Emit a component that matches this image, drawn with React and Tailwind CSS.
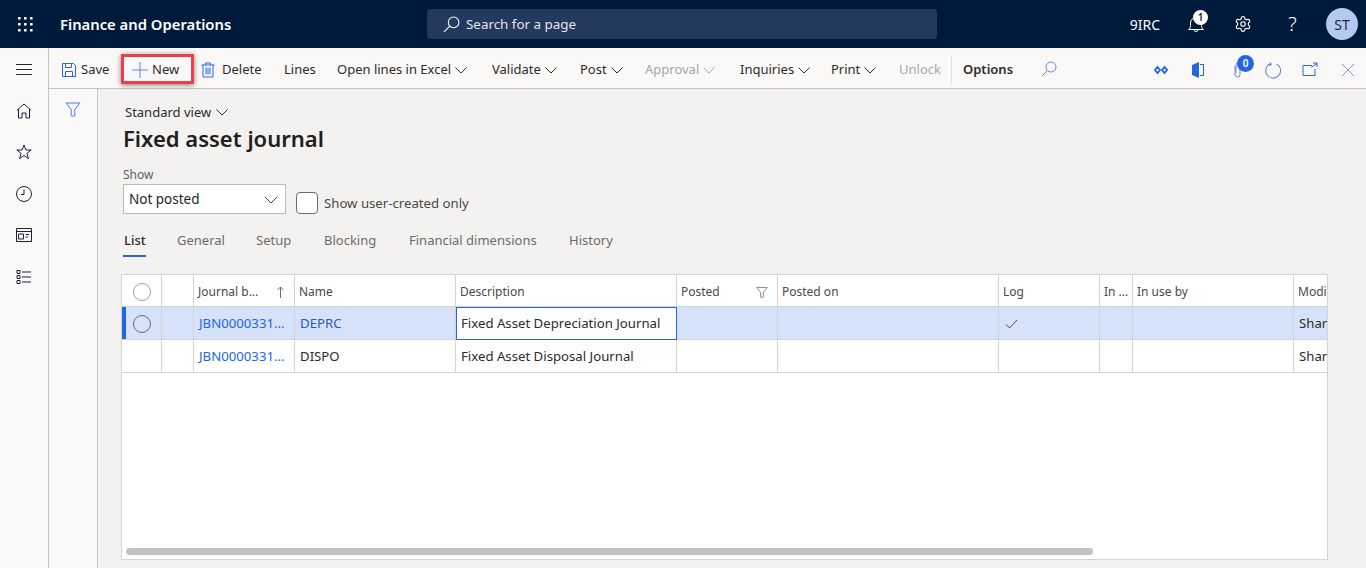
import React from 'react';
import { ChevronDown, Settings } from 'lucide-react';

const Icon = ({ className = 'w-4 h-4', children, strokeWidth = 1 }) => (
  <svg className={className} viewBox="0 0 16 16" fill="none" stroke="currentColor" strokeWidth={strokeWidth}>
    {children}
  </svg>
);

const Chevron = ({ className = 'w-3 h-[7px] ml-1' }) => (
  <svg className={className} viewBox="0 0 12 7" fill="none" stroke="currentColor">
    <path d="M.5 .5L6 6l5.5-5.5" />
  </svg>
);

const FunnelIcon = ({ className }) => (
  <Icon className={className}>
    <path d="M1 2h14L9.8 8.5V15H6.2V8.5z" />
  </Icon>
);

const WaffleIcon = () => (
  <svg className="w-4 h-4 text-white" viewBox="0 0 16 16" fill="currentColor">
    {[1, 7, 13].map(y => [1, 7, 13].map(x => <rect key={`${x}-${y}`} x={x} y={y} width="2.6" height="2.6" rx="0.6" />))}
  </svg>
);

const ToolItem = ({ label, chevron, disabled, className = '' }) => (
  <div className={`flex items-center whitespace-nowrap ${disabled ? 'text-[#a6a6a6]' : 'text-[#2b2b2b]'} ${className}`}>
    <span>{label}</span>
    {chevron && <Chevron />}
  </div>
);

const Toolbar = () => (
  <div className="h-[41px] pt-[4px] shrink-0 flex items-center text-[13px] border-b border-[#c8c6c4] bg-[#faf9f8]">
    <div className="flex items-center pl-3 w-[72px] shrink-0">
      <Icon className="w-4 h-4 text-[#2266e3] mr-[4px] shrink-0">
        <path d="M1.5 1.5h11l2 2v11h-13z" />
        <path d="M4.5 1.5v4h6v-4M4.5 14.5V9.5h7v5" />
      </Icon>
      <span className="text-[#2b2b2b]">Save</span>
    </div>
    <div className="w-[73px] h-[30px] -mt-[2px] pt-[1px] shrink-0 flex items-center pl-[8px] border-[3px] border-[#ee3f46] shadow-[0_1px_5px_rgba(0,0,0,0.5)] bg-[#f8f8f8] mr-[6px]">
      <Icon className="w-4 h-4 text-[#6c82d8] mr-[4px] shrink-0">
        <path d="M8 0v16M0 8h16" />
      </Icon>
      <span className="text-[#2b2b2b]">New</span>
    </div>
    <div className="flex items-center w-[84px] shrink-0">
      <Icon className="w-4 h-4 text-[#2266e3] mr-[6px] shrink-0">
        <path d="M1.5 3h13M5.5 3V1h5v2M3 3v12h10V3M6 5.5v7M8 5.5v7M10 5.5v7" />
      </Icon>
      <span className="text-[#2b2b2b]">Delete</span>
    </div>
    <ToolItem label="Lines" className="w-[53px] shrink-0" />
    <ToolItem label="Open lines in Excel" chevron className="w-[155px] shrink-0" />
    <ToolItem label="Validate" chevron className="w-[88px] shrink-0" />
    <ToolItem label="Post" chevron className="w-[65px] shrink-0" />
    <ToolItem label="Approval" chevron disabled className="w-[95px] shrink-0" />
    <ToolItem label="Inquiries" chevron className="w-[91px] shrink-0" />
    <ToolItem label="Print" chevron className="w-[68px] shrink-0" />
    <ToolItem label="Unlock" disabled className="w-[52px] shrink-0" />
    <div className="w-px h-7 bg-[#e1dfdd] mr-[11px] shrink-0" />
    <span className="font-semibold text-[#2b2b2b] w-[78px] shrink-0">Options</span>
    <Icon className="w-4 h-4 text-[#6c82d8] -mt-[2px] shrink-0">
      <circle cx="10" cy="6" r="5" />
      <path d="M6.5 9.5L1 15" />
    </Icon>
    <div className="flex-1" />
    <div className="flex items-center text-[#2266e3]">
      <svg className="w-[14px] h-[10px] mr-[23px]" viewBox="0 0 14 10" fill="none" stroke="currentColor" strokeWidth="1.8">
        <path d="M3.5 2L1 5l2.5 3L6 5zM10.5 2L8 5l2.5 3L13 5z" />
      </svg>
      <svg className="w-[14px] h-4 mr-[25px]" viewBox="0 0 14 16" fill="currentColor">
        <path d="M1 3l7-3v16l-7-3zM9 2h4v12H9v-1h3V3H9z" />
      </svg>
      <div className="relative w-4 h-4 mr-[19px]">
        <Icon className="w-4 h-4 text-[#6c82d8]">
          <path d="M5 4v8.5a2.5 2.5 0 0 0 5 0V3a2 2 0 0 0-4 0v8" />
        </Icon>
        <span className="absolute -top-[7px] left-[7px] w-[17px] h-[17px] rounded-full bg-[#2266e3] text-white text-[10px] font-semibold flex items-center justify-center">0</span>
      </div>
      <Icon className="w-[17px] h-[17px] text-[#6c82d8] mr-[20px]">
        <path d="M5.5 1.5A7 7 0 1 0 11 2M4.5 0.5l1.5 1.5-2 1.5" />
      </Icon>
      <Icon className="w-4 h-4 text-[#2266e3] mr-[23px]">
        <path d="M10 3.5H1v10h12V7M9 5.5l6-4M11 1h4v4" />
      </Icon>
      <Icon className="w-[14px] h-[14px] text-[#6c82d8] mr-[11px]">
        <path d="M1 1l14 14M15 1L1 15" />
      </Icon>
    </div>
  </div>
);

const RailIcon = ({ children }) => (
  <div className="h-[41.5px] flex items-center justify-center text-[#1f1f3d]">{children}</div>
);

const LeftRail = () => (
  <div className="w-[49px] shrink-0 border-r border-[#c8c6c4] bg-[#faf9f8] flex flex-col">
    <div className="h-[42px] flex items-center justify-center">
      <svg className="w-4 h-[11px] text-[#2b2b2b]" viewBox="0 0 16 11" fill="none" stroke="currentColor" strokeWidth="1">
        <path d="M0 .5h16M0 5.5h16M0 10.5h16" />
      </svg>
    </div>
    <div>
      <RailIcon>
        <Icon>
          <path d="M.8 7.5L8 1l7.2 6.5M2.5 6v9h3.5v-5h4v5h3.5V6" />
        </Icon>
      </RailIcon>
      <RailIcon>
        <Icon>
          <path d="M8 1l1.9 5h5.3l-4.3 3.3 1.6 5.4L8 11.5l-4.5 3.2 1.6-5.4L.8 6h5.3z" />
        </Icon>
      </RailIcon>
      <RailIcon>
        <Icon>
          <circle cx="8" cy="8" r="7.5" />
          <path d="M8 3.5V8.5H4.8" />
        </Icon>
      </RailIcon>
      <RailIcon>
        <Icon>
          <path d="M.5 1.5h15v13H.5zM.5 4.5h15M2.5 7h5v5h-5zM9.5 7.5h3.5M9.5 10h2.5" />
        </Icon>
      </RailIcon>
      <RailIcon>
        <Icon>
          <path d="M1 1.5h3v3H1zM1 6.5h3v3H1zM1 11.5h3v3H1zM6 3h9M6 8h9M6 13h9" />
        </Icon>
      </RailIcon>
    </div>
  </div>
);

const Tab = ({ label, active, className = '' }) => (
  <div className={`h-[26px] shrink-0 relative ${active ? 'text-[#2b2b2b] font-medium' : 'text-[#6d6b69]'} ${className}`}>
    {label}
    {active && <div className="absolute -left-[1px] bottom-0 w-[23px] h-[2px] bg-[#2266e3]" />}
  </div>
);

const Radio = ({ dark }) => (
  <div className={`w-[18px] h-[18px] rounded-full border ${dark ? 'border-[#6d6b69]' : 'border-[#a19f9d]'} bg-transparent`} />
);

const cell = 'shrink-0 h-full pt-[2px] flex items-center border-r border-[#d6d4d2] overflow-hidden whitespace-nowrap';

const HeaderRow = () => (
  <div className="flex h-[32px] border-b border-[#d6d4d2] text-[12px] text-[#4a4847]">
    <div className={`${cell} w-[40px] justify-center`}><Radio /></div>
    <div className={`${cell} w-[32px]`} />
    <div className={`${cell} w-[101px] pl-1 justify-between pr-[9px]`}>
      <span>Journal b...</span>
      <svg className="w-[9px] h-3 text-[#6d6b69]" viewBox="0 0 9 12" fill="none" stroke="currentColor">
        <path d="M4.5 12V1M1.5 4l3-3 3 3" />
      </svg>
    </div>
    <div className={`${cell} w-[161px] pl-1`}>Name</div>
    <div className={`${cell} w-[221px] pl-1`}>Description</div>
    <div className={`${cell} w-[101px] pl-1 justify-between pr-[9px]`}>
      <span>Posted</span>
      <FunnelIcon className="w-3 h-3 text-[#6d6b69]" />
    </div>
    <div className={`${cell} w-[221px] pl-1`}>Posted on</div>
    <div className={`${cell} w-[101px] pl-1`}>Log</div>
    <div className={`${cell} w-[33px] pl-1`}>In ...</div>
    <div className={`${cell} w-[161px] pl-[4px]`}>In use by</div>
    <div className="shrink-0 h-full pt-[2px] flex items-center pl-1">Modified by</div>
  </div>
);

const DataRow = ({ selected, journal, name, description }) => (
  <div className={`flex h-[33px] border-b border-[#d6d4d2] text-[13.2px] text-[#2b2b2b] ${selected ? 'bg-[#d5e2f9]' : ''}`}>
    <div className={`${cell} w-[40px] justify-center relative`}>
      {selected && <>
        <div className="absolute left-0 top-0 bottom-0 w-1 bg-[#2266e3]" />
        <Radio dark />
      </>}
    </div>
    <div className={`${cell} w-[32px]`} />
    <div className={`${cell} w-[101px] pl-[5px] text-[#2266e3]`}>{journal}</div>
    <div className={`${cell} w-[161px] pl-[5px] ${selected ? 'text-[#2a5bb8]' : ''}`}>{name}</div>
    {selected ? (
      <div className="shrink-0 w-[221px] h-[33px] pt-[1px] border border-[#2266e3] bg-white flex items-center pl-[4px] whitespace-nowrap z-10">{description}</div>
    ) : (
      <div className={`${cell} w-[221px] pl-[5px]`}>{description}</div>
    )}
    <div className={`${cell} w-[101px]`} />
    <div className={`${cell} w-[221px]`} />
    <div className={`${cell} w-[101px] pl-[6px]`}>
      {selected && (
        <svg className="w-[13px] h-[10px] text-[#4a4847]" viewBox="0 0 13 10" fill="none" stroke="currentColor">
          <path d="M1 5.5l3.5 3.5L12 1" />
        </svg>
      )}
    </div>
    <div className={`${cell} w-[33px]`} />
    <div className={`${cell} w-[161px]`} />
    <div className="shrink-0 h-full pt-[2px] flex items-center pl-[5px] whitespace-nowrap">Shane T</div>
  </div>
);

const Grid = () => (
  <div className="w-[1207px] h-[286px] ml-[23px] mt-[17px] border border-[#d6d4d2] bg-white overflow-hidden relative">
    <HeaderRow />
    <DataRow selected journal="JBN0000331..." name="DEPRC" description="Fixed Asset Depreciation Journal" />
    <DataRow journal="JBN0000331..." name="DISPO" description="Fixed Asset Disposal Journal" />
    <div className="absolute left-[4px] bottom-[4px] h-[7px] w-[967px] rounded-full bg-[#c2c2c2]" />
  </div>
);

export default function App() {
  return (
    <div className="w-[1366px] h-[568px] overflow-hidden flex flex-col bg-[#f3f2f1] font-['Noto_Sans','Open_Sans',sans-serif]">
      {/* Top bar */}
      <div className="h-12 shrink-0 bg-[#001a3b] flex items-center text-white">
        <div className="w-[49px] flex justify-center"><WaffleIcon /></div>
        <div className="w-[378px] pl-[11px] shrink-0 text-[14.8px] font-semibold">Finance and Operations</div>
        <div className="w-[510px] h-[30px] shrink-0 bg-[#23395d] rounded-sm flex items-center pl-4 pt-[1px] text-[13.4px] text-[#e6e6e6]">
          <Icon className="w-[17px] h-[17px] mr-[6px] text-white">
            <circle cx="10" cy="6" r="5" />
            <path d="M6.5 9.5L1 15" />
          </Icon>
          Search for a page
        </div>
        <div className="flex-1" />
        <span className="text-[14px] mr-[28px]">9IRC</span>
        <div className="relative w-4 h-4 mr-[30px]">
          <Icon className="w-4 h-4 text-white">
            <path d="M.5 13.5c1.5-1 2-2 2-4V7a5.5 5.5 0 0 1 11 0v2.5c0 2 .5 3 2 4zM6 13.5a2 2 0 0 0 4 0" />
          </Icon>
          <span className="absolute -top-[6px] left-[5px] w-[15px] h-[15px] rounded-full bg-white text-[#001a3b] text-[10px] font-semibold flex items-center justify-center">1</span>
        </div>
        <Settings className="w-[18px] h-[18px] mr-[34px]" strokeWidth={1.5} />
        <span className="text-[20px] font-light mr-[27px] leading-none w-[13px] text-center">?</span>
        <div className="w-8 h-8 rounded-full bg-[#b4c9f0] text-[#1f2a44] text-[14px] flex items-center justify-center mr-[8px]">ST</div>
      </div>

      <div className="flex-1 flex min-h-0">
        <LeftRail />
        <div className="flex-1 flex flex-col min-w-0">
          <Toolbar />
          <div className="flex-1 flex min-h-0">
            <div className="w-[49px] shrink-0 border-r border-[#c8c6c4] bg-[#faf9f8] flex justify-center pt-3">
              <FunnelIcon className="w-4 h-4 text-[#4a7bf0]" />
            </div>
            <div className="flex-1 min-w-0">
              <div className="pl-[27px] pt-[13px] flex items-center text-[13px] text-[#2b2b2b] h-[34px]">
                Standard view
                <Chevron className="w-3 h-[7px] ml-[5px]" />
              </div>
              <h1 className="pl-[25px] -mt-[1px] text-[22px] leading-[32px] font-semibold text-[#201f1e]">Fixed asset journal</h1>
              <div className="pl-[25px] mt-[12px] text-[12px] text-[#605e5c] leading-[18px]">Show</div>
              <div className="pl-[25px] flex items-start">
                <div className="w-[163px] h-[30px] pt-[1px] bg-white border border-[#bdbbb9] flex items-center justify-between pl-[5px] pr-[3px] text-[13.5px] text-[#201f1e]">
                  Not posted
                  <ChevronDown className="w-[24px] h-[24px] -mr-[1px] text-[#4a4847]" strokeWidth={1} />
                </div>
                <div className="w-[22px] h-[22px] ml-[10px] mt-[8px] bg-white border border-[#6d6b69] rounded-sm" />
                <span className="ml-[6px] mt-[10px] text-[13.2px] text-[#4a4847]">Show user-created only</span>
              </div>
              <div className="pl-[26px] mt-[17px] flex text-[13px]">
                <Tab label="List" active className="w-[53px]" />
                <Tab label="General" className="w-[79px]" />
                <Tab label="Setup" className="w-[68px]" />
                <Tab label="Blocking" className="w-[85px]" />
                <Tab label="Financial dimensions" className="w-[160px]" />
                <Tab label="History" />
              </div>
              <Grid />
            </div>
          </div>
        </div>
      </div>
    </div>
  );
}
